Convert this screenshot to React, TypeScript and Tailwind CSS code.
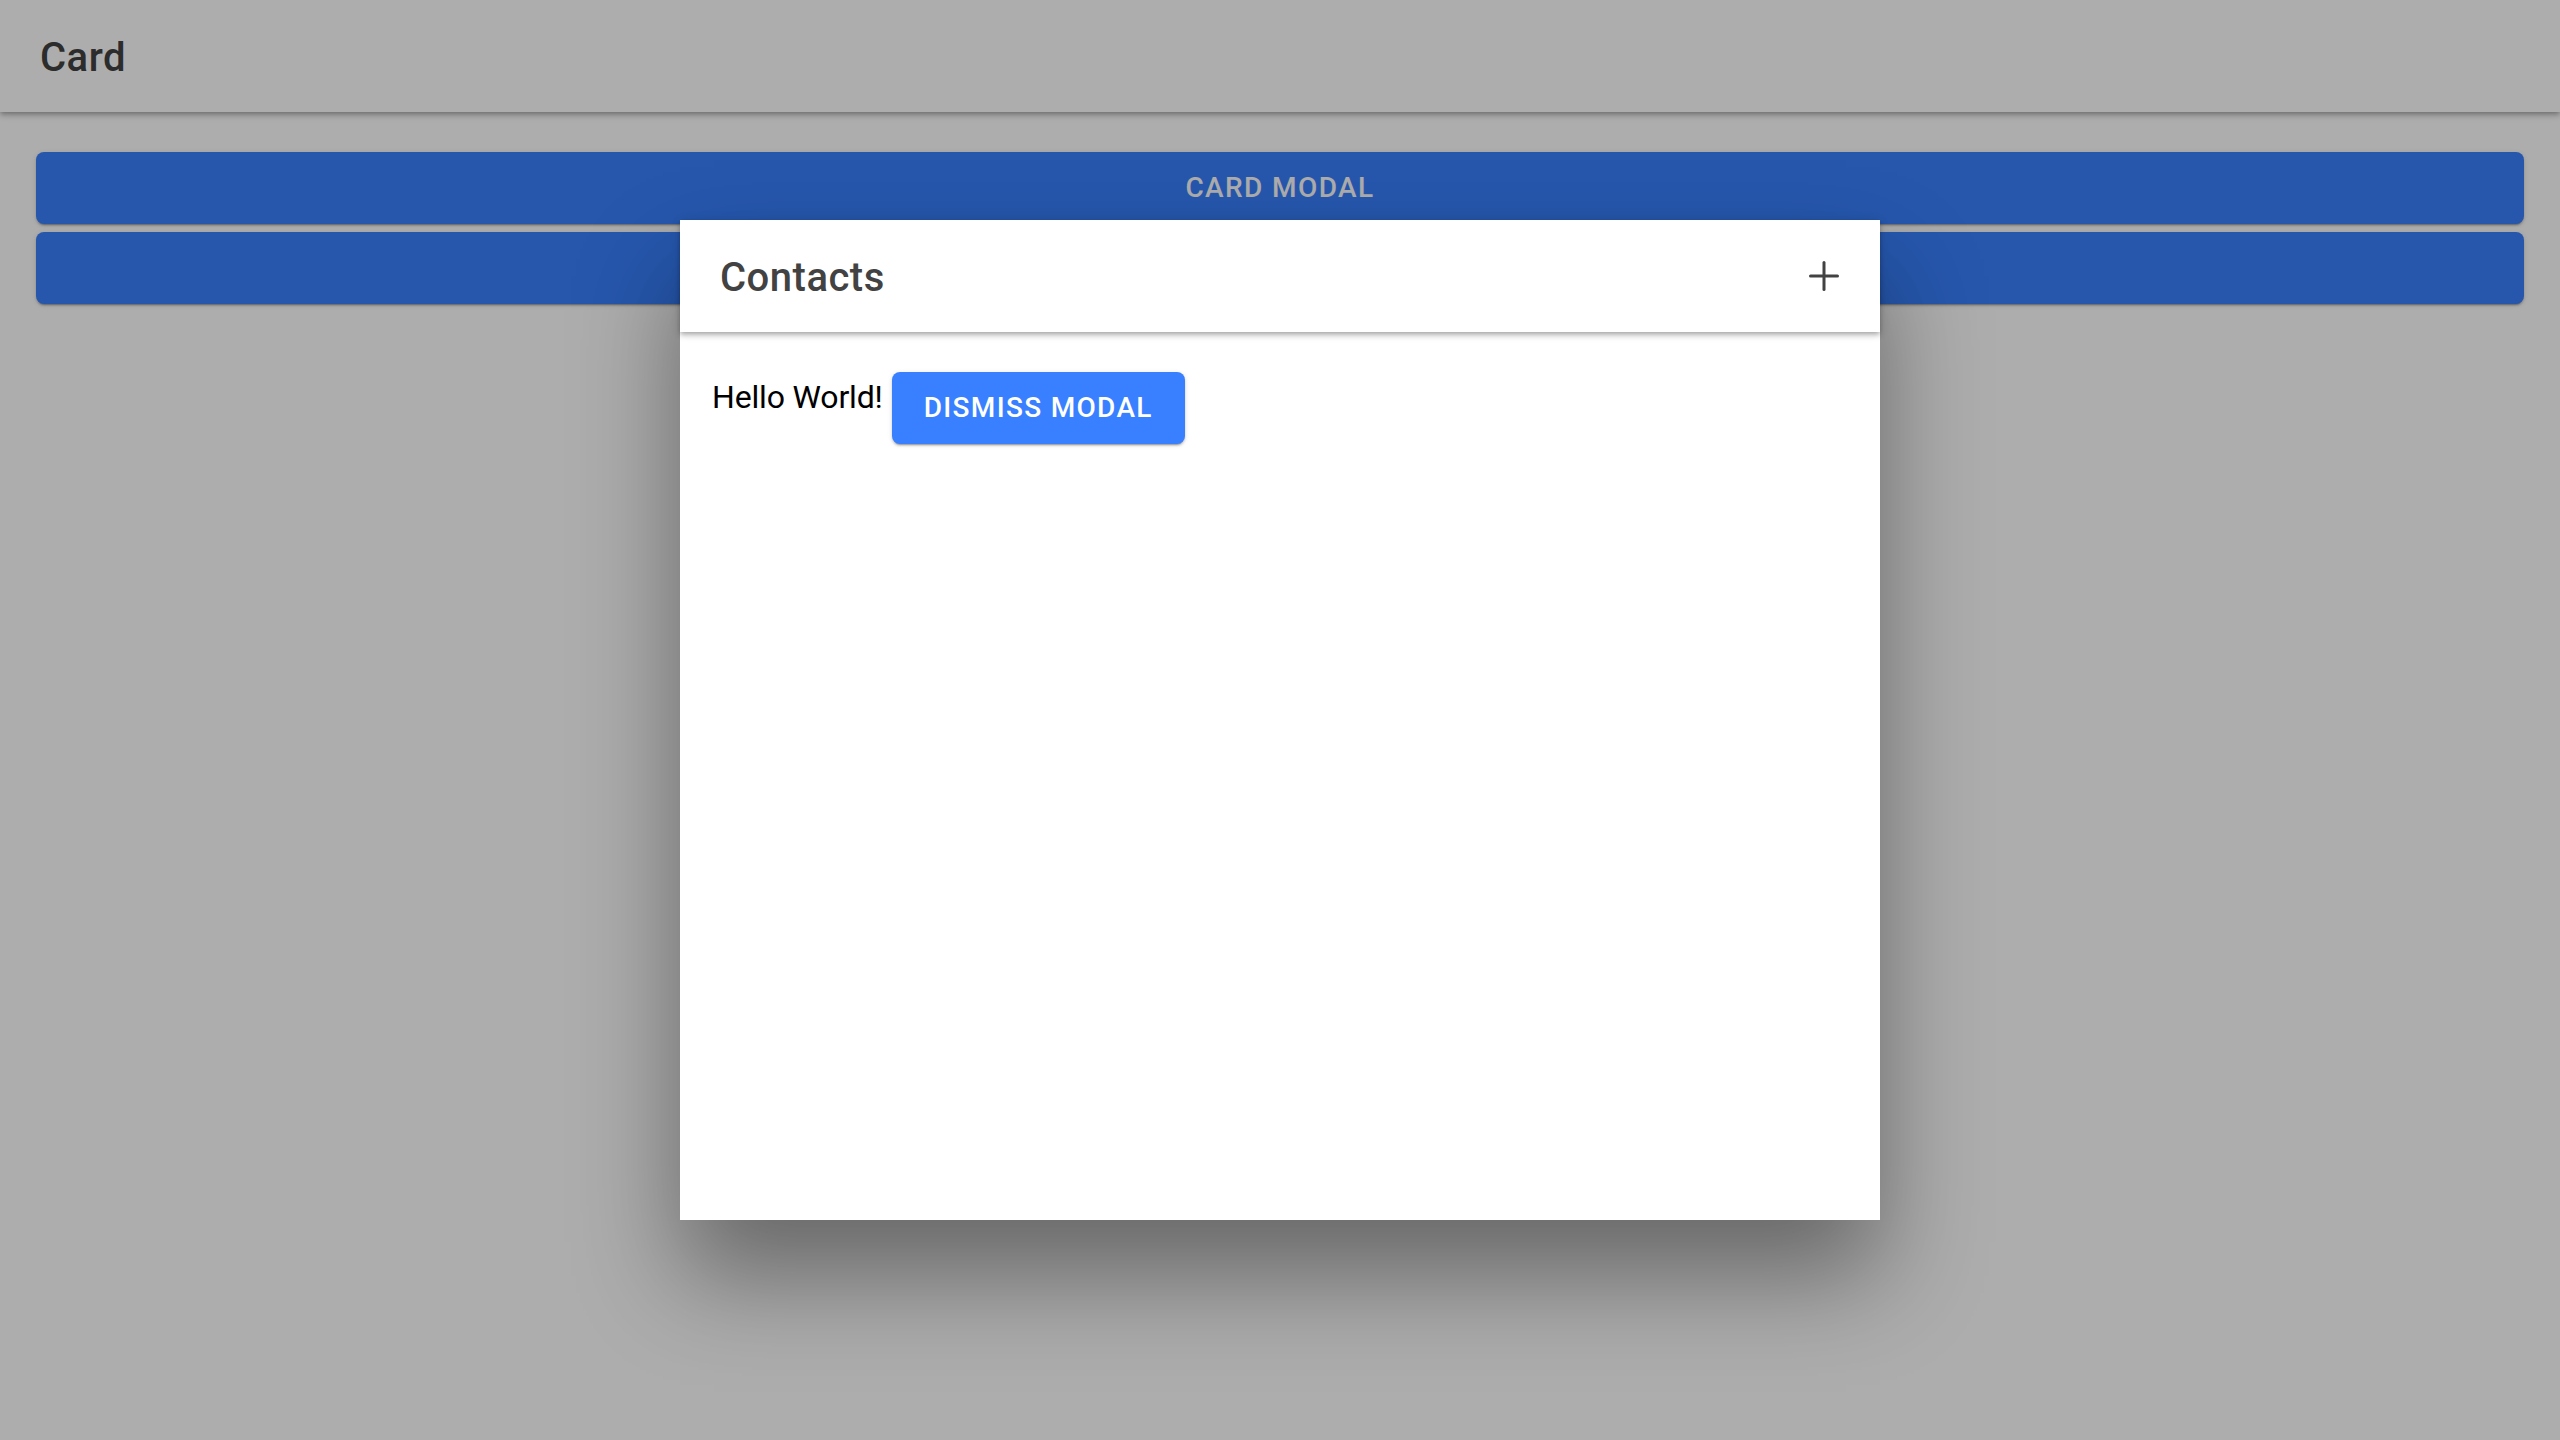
import React from 'react';

// Plus glyph (thin "add" outline icon)
const AddIcon: React.FC = () => (
  <svg width="30" height="30" viewBox="0 0 30 30" fill="none" stroke="#424242" strokeWidth="3" strokeLinecap="round">
    <line x1="15" y1="1.5" x2="15" y2="28.5" />
    <line x1="1.5" y1="15" x2="28.5" y2="15" />
  </svg>
);

export default function App() {
  return (
    <div className="relative w-[2560px] h-[1440px] overflow-hidden bg-white font-['Roboto','Liberation_Sans',sans-serif]">
      {/* Page */}
      <header className="relative z-10 h-[112px] bg-white flex items-center px-[40px] shadow-[0_2px_4px_-1px_rgba(0,0,0,0.2),0_4px_5px_0_rgba(0,0,0,0.14),0_1px_10px_0_rgba(0,0,0,0.12)]">
        <h1 className="mt-[3px] text-[40px] font-medium tracking-[0.0125em] text-[#424242]">Card</h1>
      </header>
      <main className="flex flex-col gap-[8px] pt-[40px] px-[36px]">
        <button className="h-[72px] w-full rounded-[8px] bg-[#3880ff] text-white text-[28px] font-medium uppercase tracking-[0.05em] shadow-[0_3px_1px_-2px_rgba(0,0,0,0.2),0_2px_2px_0_rgba(0,0,0,0.14),0_1px_5px_0_rgba(0,0,0,0.12)]">
          Card Modal
        </button>
        <button className="h-[72px] w-full rounded-[8px] bg-[#3880ff] text-white text-[28px] font-medium uppercase tracking-[0.05em] shadow-[0_3px_1px_-2px_rgba(0,0,0,0.2),0_2px_2px_0_rgba(0,0,0,0.14),0_1px_5px_0_rgba(0,0,0,0.12)]"></button>
      </main>

      {/* Backdrop */}
      <div className="absolute inset-0 z-20 bg-black/[0.32]" />

      {/* Modal */}
      <div className="absolute z-30 left-[680px] top-[220px] w-[1200px] h-[1000px] bg-white flex flex-col shadow-[0_56px_96px_rgba(0,0,0,0.4)]">
        <div className="relative z-10 h-[112px] shrink-0 flex items-center justify-between pl-[40px] pr-[41px] bg-white shadow-[0_2px_4px_-1px_rgba(0,0,0,0.2),0_4px_5px_0_rgba(0,0,0,0.14),0_1px_10px_0_rgba(0,0,0,0.12)]">
          <h2 className="mt-[3px] text-[40px] font-medium tracking-[0.0125em] text-[#424242]">Contacts</h2>
          <AddIcon />
        </div>
        <div className="flex-1 p-[32px] flex items-start">
          <span className="mt-[15px] text-[32px] leading-[37px] tracking-[-0.005em] text-black">Hello World!</span>
          <button className="ml-[9px] mt-[8px] h-[72px] px-[32px] rounded-[8px] bg-[#3880ff] text-white text-[28px] font-medium uppercase tracking-[0.047em] shadow-[0_3px_1px_-2px_rgba(0,0,0,0.2),0_2px_2px_0_rgba(0,0,0,0.14),0_1px_5px_0_rgba(0,0,0,0.12)]">
            Dismiss Modal
          </button>
        </div>
      </div>
    </div>
  );
}
